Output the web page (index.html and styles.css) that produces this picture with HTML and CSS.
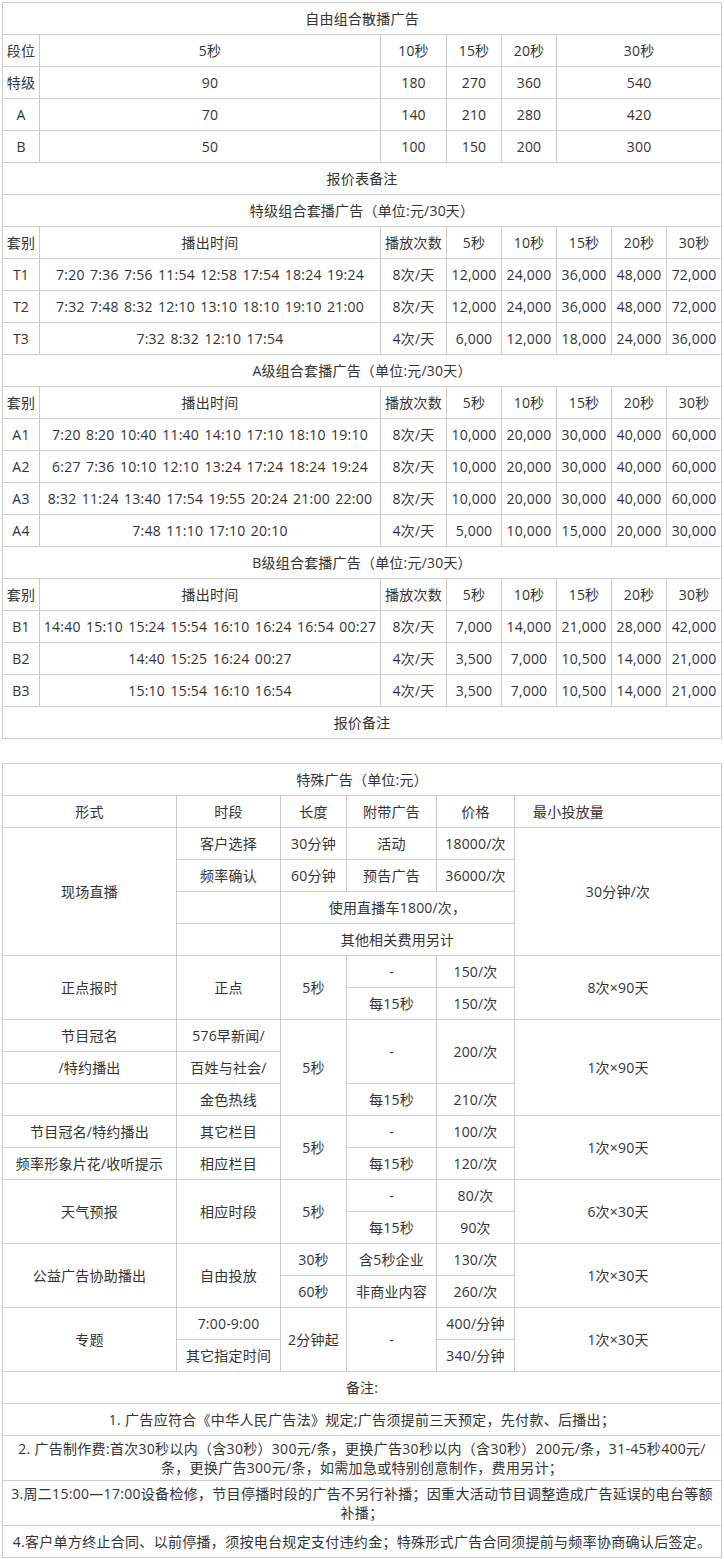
FILE: index.html
```html
<!DOCTYPE html>
<html lang="zh-CN">
<head>
<meta charset="utf-8">
<title>广告报价表</title>
<link rel="stylesheet" href="styles.css">
</head>
<body>
<div class="page">
<table class="price">
<colgroup>
<col class="c-a"><col class="c-b"><col class="c-c"><col class="c-d"><col class="c-d"><col class="c-d"><col class="c-d"><col class="c-d">
</colgroup>
<tbody>
<tr><td colspan="8">自由组合散播广告</td></tr>
<tr><td>段位</td><td>5秒</td><td>10秒</td><td>15秒</td><td>20秒</td><td colspan="3">30秒</td></tr>
<tr><td>特级</td><td>90</td><td>180</td><td>270</td><td>360</td><td colspan="3">540</td></tr>
<tr><td>A</td><td>70</td><td>140</td><td>210</td><td>280</td><td colspan="3">420</td></tr>
<tr><td>B</td><td>50</td><td>100</td><td>150</td><td>200</td><td colspan="3">300</td></tr>
<tr><td colspan="8">报价表备注</td></tr>
<tr><td colspan="8">特级组合套播广告（单位:元/30天）</td></tr>
<tr><td>套别</td><td>播出时间</td><td>播放次数</td><td>5秒</td><td>10秒</td><td>15秒</td><td>20秒</td><td>30秒</td></tr>
<tr><td>T1</td><td class="times">7:20 7:36 7:56 11:54 12:58 17:54 18:24 19:24</td><td>8次/天</td><td>12,000</td><td>24,000</td><td>36,000</td><td>48,000</td><td>72,000</td></tr>
<tr><td>T2</td><td class="times">7:32 7:48 8:32 12:10 13:10 18:10 19:10 21:00</td><td>8次/天</td><td>12,000</td><td>24,000</td><td>36,000</td><td>48,000</td><td>72,000</td></tr>
<tr><td>T3</td><td class="times">7:32 8:32 12:10 17:54</td><td>4次/天</td><td>6,000</td><td>12,000</td><td>18,000</td><td>24,000</td><td>36,000</td></tr>
<tr><td colspan="8">A级组合套播广告（单位:元/30天）</td></tr>
<tr><td>套别</td><td>播出时间</td><td>播放次数</td><td>5秒</td><td>10秒</td><td>15秒</td><td>20秒</td><td>30秒</td></tr>
<tr><td>A1</td><td class="times">7:20 8:20 10:40 11:40 14:10 17:10 18:10 19:10</td><td>8次/天</td><td>10,000</td><td>20,000</td><td>30,000</td><td>40,000</td><td>60,000</td></tr>
<tr><td>A2</td><td class="times">6:27 7:36 10:10 12:10 13:24 17:24 18:24 19:24</td><td>8次/天</td><td>10,000</td><td>20,000</td><td>30,000</td><td>40,000</td><td>60,000</td></tr>
<tr><td>A3</td><td class="times">8:32 11:24 13:40 17:54 19:55 20:24 21:00 22:00</td><td>8次/天</td><td>10,000</td><td>20,000</td><td>30,000</td><td>40,000</td><td>60,000</td></tr>
<tr><td>A4</td><td class="times">7:48 11:10 17:10 20:10</td><td>4次/天</td><td>5,000</td><td>10,000</td><td>15,000</td><td>20,000</td><td>30,000</td></tr>
<tr><td colspan="8">B级组合套播广告（单位:元/30天）</td></tr>
<tr><td>套别</td><td>播出时间</td><td>播放次数</td><td>5秒</td><td>10秒</td><td>15秒</td><td>20秒</td><td>30秒</td></tr>
<tr><td>B1</td><td class="times">14:40 15:10 15:24 15:54 16:10 16:24 16:54 00:27</td><td>8次/天</td><td>7,000</td><td>14,000</td><td>21,000</td><td>28,000</td><td>42,000</td></tr>
<tr><td>B2</td><td class="times">14:40 15:25 16:24 00:27</td><td>4次/天</td><td>3,500</td><td>7,000</td><td>10,500</td><td>14,000</td><td>21,000</td></tr>
<tr><td>B3</td><td class="times">15:10 15:54 16:10 16:54</td><td>4次/天</td><td>3,500</td><td>7,000</td><td>10,500</td><td>14,000</td><td>21,000</td></tr>
<tr><td colspan="8">报价备注</td></tr>
</tbody>
</table>

<table class="special">
<colgroup>
<col class="s-a"><col class="s-b"><col class="s-c"><col class="s-d"><col class="s-e"><col class="s-f">
</colgroup>
<tbody>
<tr><td colspan="6">特殊广告（单位:元）</td></tr>
<tr><td>形式</td><td>时段</td><td>长度</td><td>附带广告</td><td>价格</td><td class="left">最小投放量</td></tr>

<tr><td rowspan="4">现场直播</td><td>客户选择</td><td>30分钟</td><td>活动</td><td>18000/次</td><td rowspan="4">30分钟/次</td></tr>
<tr><td>频率确认</td><td>60分钟</td><td>预告广告</td><td>36000/次</td></tr>
<tr><td></td><td colspan="3">使用直播车1800/次，</td></tr>
<tr><td></td><td colspan="3">其他相关费用另计</td></tr>

<tr><td rowspan="2">正点报时</td><td rowspan="2">正点</td><td rowspan="2">5秒</td><td>-</td><td>150/次</td><td rowspan="2">8次×90天</td></tr>
<tr><td>每15秒</td><td>150/次</td></tr>

<tr><td>节目冠名</td><td>576早新闻/</td><td rowspan="3">5秒</td><td rowspan="2">-</td><td rowspan="2">200/次</td><td rowspan="3">1次×90天</td></tr>
<tr><td>/特约播出</td><td>百姓与社会/</td></tr>
<tr><td></td><td>金色热线</td><td>每15秒</td><td>210/次</td></tr>

<tr><td>节目冠名/特约播出</td><td>其它栏目</td><td rowspan="2">5秒</td><td>-</td><td>100/次</td><td rowspan="2">1次×90天</td></tr>
<tr><td>频率形象片花/收听提示</td><td>相应栏目</td><td>每15秒</td><td>120/次</td></tr>

<tr><td rowspan="2">天气预报</td><td rowspan="2">相应时段</td><td rowspan="2">5秒</td><td>-</td><td>80/次</td><td rowspan="2">6次×30天</td></tr>
<tr><td>每15秒</td><td>90次</td></tr>

<tr><td rowspan="2">公益广告协助播出</td><td rowspan="2">自由投放</td><td>30秒</td><td>含5秒企业</td><td>130/次</td><td rowspan="2">1次×30天</td></tr>
<tr><td>60秒</td><td>非商业内容</td><td>260/次</td></tr>

<tr><td rowspan="2">专题</td><td>7:00-9:00</td><td rowspan="2">2分钟起</td><td rowspan="2">-</td><td>400/分钟</td><td rowspan="2">1次×30天</td></tr>
<tr><td>其它指定时间</td><td>340/分钟</td></tr>

<tr><td colspan="6">备注:</td></tr>
<tr><td colspan="6" class="note">1. 广告应符合《中华人民广告法》规定;广告须提前三天预定，先付款、后播出；</td></tr>
<tr><td colspan="6" class="note">2. 广告制作费:首次30秒以内（含30秒）300元/条，更换广告30秒以内（含30秒）200元/条，31-45秒400元/条，更换广告300元/条，如需加急或特别创意制作，费用另计；</td></tr>
<tr><td colspan="6" class="note">3.周二15:00—17:00设备检修，节目停播时段的广告不另行补播；因重大活动节目调整造成广告延误的电台等额补播；</td></tr>
<tr><td colspan="6" class="note">4.客户单方终止合同、以前停播，须按电台规定支付违约金；特殊形式广告合同须提前与频率协商确认后签定。</td></tr>
</tbody>
</table>
</div>
</body>
</html>
```

FILE: styles.css
```css
html, body {
  margin: 0;
  padding: 0;
  background: #fff;
}
body {
  font-family: "Open Sans", "Noto Sans CJK SC", sans-serif;
  font-size: 14px;
  color: #333;
  text-spacing-trim: space-all;
}
.page {
  display: flex;
  flex-direction: column;
  gap: 24px;
  padding: 2px 0 0 2px;
}
table {
  border-collapse: collapse;
  table-layout: fixed;
  width: 720px;
}
td {
  border: 1px solid #ccc;
  text-align: center;
  vertical-align: middle;
  padding: 3px;
  line-height: 19px;
  height: 25px;
  letter-spacing: 0.2px;
}
td.times {
  word-spacing: 1.4px;
  letter-spacing: 0.25px;
}
td.note {
  letter-spacing: 0.3px;
}
.price .c-a { width: 37px; }
.price .c-b { width: 341px; }
.price .c-c { width: 66px; }
.price .c-d { width: 55px; }

.special .s-a { width: 174px; }
.special .s-b { width: 104px; }
.special .s-c { width: 66px; }
.special .s-d { width: 90px; }
.special .s-e { width: 78px; }
.special .s-f { width: 207px; }

td.left {
  text-align: left;
  padding-left: 18px;
}
```
